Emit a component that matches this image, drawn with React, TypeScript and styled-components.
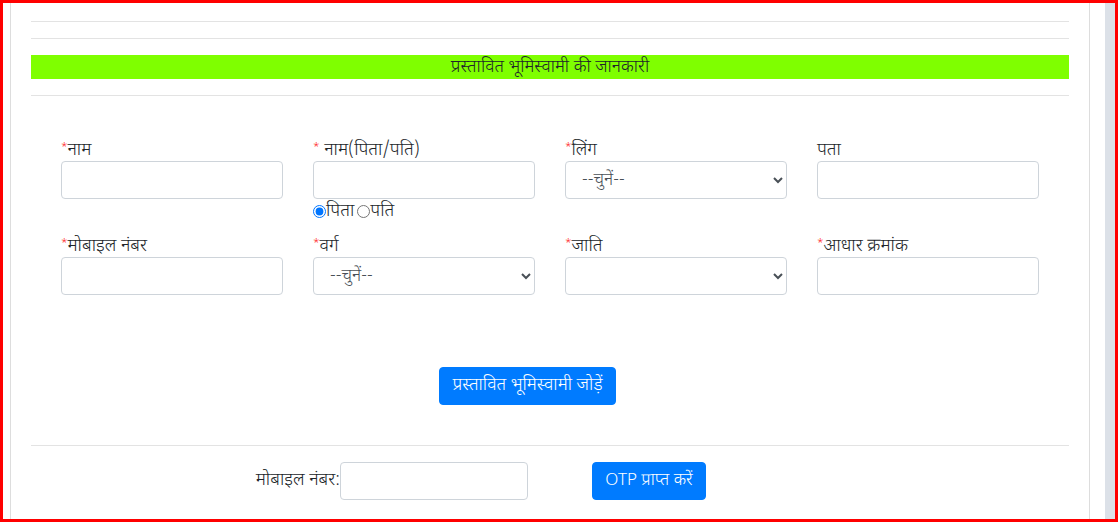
import React from "react";
import styled, { createGlobalStyle } from "styled-components";

const GlobalStyle = createGlobalStyle`
  html, body { margin: 0; padding: 0; background: #fff; }
  body {
    font-family: "Noto Sans Devanagari", "Noto Sans", "Liberation Sans", sans-serif;
    color: #212529;
    font-size: 18px;
    line-height: 24px;
  }
  * { box-sizing: border-box; }
`;

const Frame = styled.div`
  width: 1118px;
  height: 522px;
  border: 3px solid #ff0000;
  display: flex;
  overflow: hidden;
  background: #fff;
`;

const LeftGutter = styled.div`
  width: 7px;
  flex: none;
`;

const Main = styled.main`
  width: 1080px;
  flex: none;
  border-left: 1px solid #dddddd;
  border-right: 1px solid #dddddd;
  padding: 0 20px;
  display: flex;
  flex-direction: column;
`;

const RightGap = styled.div`
  width: 15px;
  flex: none;
`;

const Track = styled.div`
  width: 10px;
  flex: none;
  background: #dce1e8;
`;

const Rule = styled.hr<{ $top: number }>`
  margin: ${(p) => p.$top}px 0 0;
  border: 0;
  border-top: 1px solid #e3e3e3;
  height: 0;
`;

const Banner = styled.div`
  margin-top: 16px;
  height: 24px;
  background: #7fff00;
  text-align: center;
  font-size: 17.6px;
  line-height: 26px;
  color: #212529;
  font-weight: 350;
  white-space: nowrap;
  overflow: hidden;
`;

const FormGrid = styled.div`
  margin-top: 41px;
  padding-left: 30px;
  display: grid;
  grid-template-columns: repeat(4, 222px);
  column-gap: 30px;
  row-gap: 10px;
  align-items: start;
`;

const Field = styled.div`
  display: flex;
  flex-direction: column;
`;

const Label = styled.label`
  font-size: 18px;
  line-height: 27px;
  height: 24px;
  white-space: nowrap;
  font-weight: 350;
`;

const Star = styled.span`
  color: #ff0000;
  font-size: 11px;
  vertical-align: top;
  line-height: 20px;
`;

const TextInput = styled.input<{ $w?: number }>`
  width: ${(p) => (p.$w ? `${p.$w}px` : "100%")};
  height: 38px;
  border: 1px solid #ced4da;
  border-radius: 4px;
  padding: 6px 12px;
  font-size: 16px;
  color: #495057;
  background: #fff;
  outline: none;
  margin: 0;
`;

const Select = styled.select`
  width: 100%;
  height: 38px;
  border: 1px solid #ced4da;
  border-radius: 4px;
  padding: 6px 8px 6px 12px;
  font-size: 17.5px;
  font-weight: 350;
  font-family: inherit;
  color: #495057;
  background: #fff;
  outline: none;
  margin: 0;
`;

const RadioRow = styled.div`
  display: flex;
  align-items: center;
  height: 24px;
  font-size: 18px;
  font-weight: 350;
  line-height: 27px;
`;

const Radio = styled.input<{ $gap?: number }>`
  margin: 0 0 0 ${(p) => p.$gap ?? 0}px;
  width: 13px;
  height: 13px;
`;

const ButtonRow = styled.div<{ $pad: number; $top: number }>`
  margin-top: ${(p) => p.$top}px;
  padding-left: ${(p) => p.$pad}px;
  display: flex;
  align-items: center;
`;

const PrimaryButton = styled.button<{ $w: number; $size?: number }>`
  width: ${(p) => p.$w}px;
  height: 38px;
  background: #007bff;
  border: 1px solid #007bff;
  border-radius: 4px;
  color: #fff;
  font-family: inherit;
  font-size: ${(p) => p.$size ?? 17.8}px;
  font-weight: 350;
  line-height: 26px;
  padding: 0;
  white-space: nowrap;
`;

const OtpRow = styled.div`
  margin-top: 16px;
  padding-left: 214px;
  display: flex;
  align-items: center;
`;

const InlineLabel = styled.span`
  font-size: 18px;
  font-weight: 350;
  line-height: 26px;
  width: 95px;
  text-align: right;
  white-space: nowrap;
`;

const Spacer = styled.div<{ $w: number }>`
  width: ${(p) => p.$w}px;
  flex: none;
`;

type FieldDef = {
  label: string;
  required?: boolean;
  spaced?: boolean;
  kind: "input" | "select";
  placeholderOption?: string;
  radios?: boolean;
};

const fields: FieldDef[] = [
  { label: "नाम", required: true, kind: "input" },
  { label: "नाम(पिता/पति)", required: true, spaced: true, kind: "input", radios: true },
  { label: "लिंग", required: true, kind: "select", placeholderOption: "--चुनें--" },
  { label: "पता", kind: "input" },
  { label: "मोबाइल नंबर", required: true, kind: "input" },
  { label: "वर्ग", required: true, kind: "select", placeholderOption: "--चुनें--" },
  { label: "जाति", required: true, kind: "select", placeholderOption: "" },
  { label: "आधार क्रमांक", required: true, kind: "input" },
];

export default function App() {
  return (
    <>
      <GlobalStyle />
      <Frame>
        <LeftGutter />
        <Main>
          <Rule $top={18} />
          <Rule $top={16} />
          <Banner>प्रस्तावित भूमिस्वामी की जानकारी</Banner>
          <Rule $top={16} />
          <FormGrid>
            {fields.map((f, i) => (
              <Field key={i}>
                <Label>
                  {f.required && <Star>*</Star>}
                  {f.spaced ? " " : ""}
                  {f.label}
                </Label>
                {f.kind === "input" ? (
                  <TextInput type="text" />
                ) : (
                  <Select defaultValue="0">
                    <option value="0">{f.placeholderOption}</option>
                  </Select>
                )}
                {f.radios && (
                  <RadioRow>
                    <Radio type="radio" name="rel" defaultChecked />
                    पिता
                    <Radio type="radio" name="rel" $gap={3} />
                    पति
                  </RadioRow>
                )}
              </Field>
            ))}
          </FormGrid>
          <ButtonRow $pad={408} $top={72}>
            <PrimaryButton $w={177}>प्रस्तावित भूमिस्वामी जोड़ें</PrimaryButton>
          </ButtonRow>
          <Rule $top={40} />
          <OtpRow>
            <InlineLabel>मोबाइल नंबर:</InlineLabel>
            <TextInput type="text" $w={188} />
            <Spacer $w={64} />
            <PrimaryButton $w={114} $size={17}>
              OTP प्राप्त करें
            </PrimaryButton>
          </OtpRow>
        </Main>
        <RightGap />
        <Track />
      </Frame>
    </>
  );
}
